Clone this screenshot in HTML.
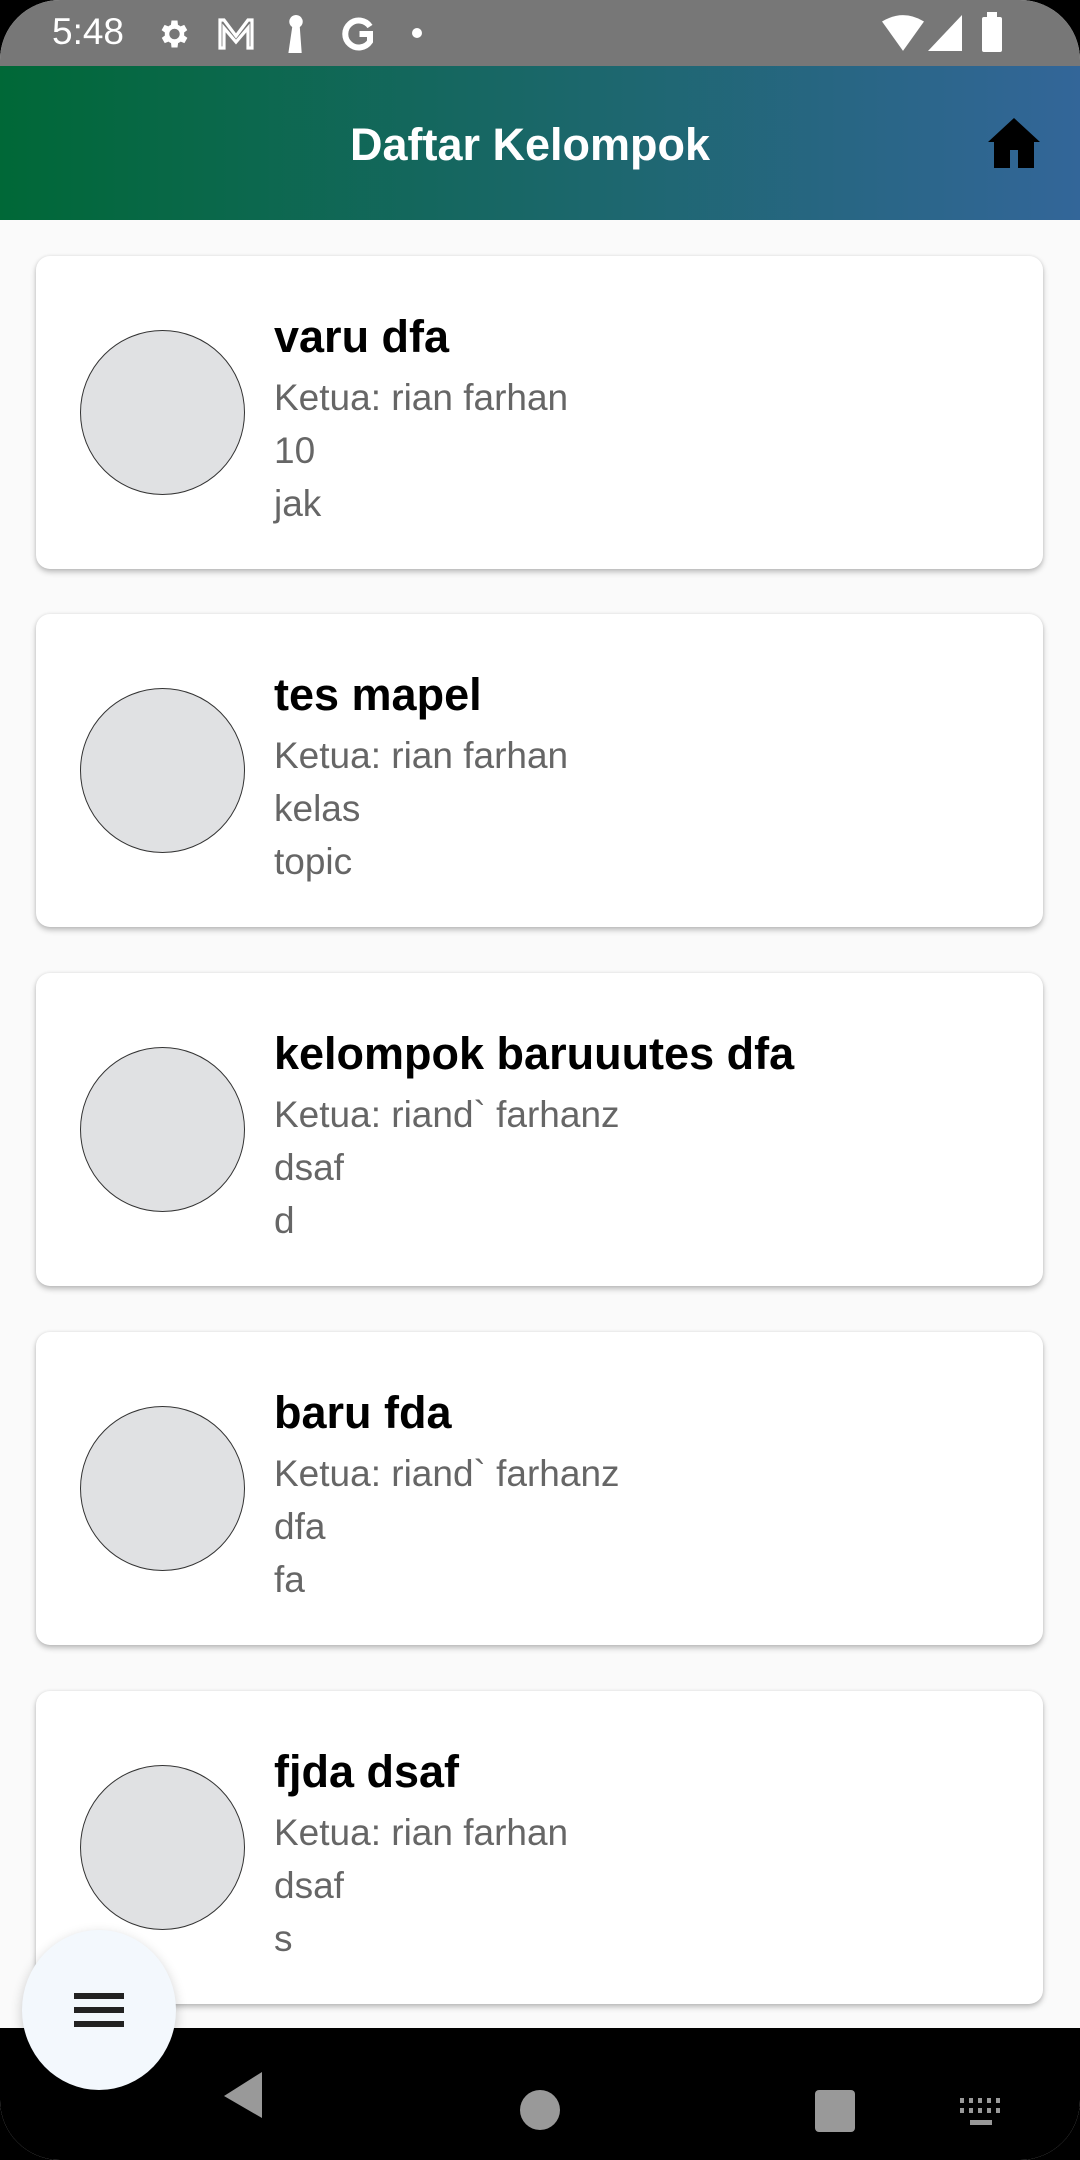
<!DOCTYPE html>
<html><head><meta charset="utf-8"><style>
*{margin:0;padding:0;box-sizing:border-box}
body{width:1080px;height:2160px;background:#000;font-family:"Liberation Sans",Roboto,sans-serif;overflow:hidden;position:relative}
.screen{position:absolute;left:0;top:0;width:1080px;height:2160px;background:#fafafa;border-radius:60px 60px 60px 60px;overflow:hidden}
.status{position:absolute;top:0;left:0;width:1080px;height:66px;background:#777;color:#fff}
.time{position:absolute;left:52px;top:11px;font-size:37px}
.appbar{position:absolute;top:66px;left:0;width:1080px;height:154px;background:linear-gradient(90deg,#006837,#336699)}
.appbar h1{position:absolute;left:0;right:0;top:53px;text-align:center;font-size:45px;font-weight:bold;color:#fff;padding-right:20px}
.card{position:absolute;left:36px;width:1007px;height:313px;background:#fff;border-radius:14px;box-shadow:0 3px 6px rgba(0,0,0,.25),0 0 3px rgba(0,0,0,.08)}
.circ{position:absolute;left:44px;top:74px;width:165px;height:165px;border-radius:50%;background:#e0e1e3;border:1.5px solid #333}
.t{position:absolute;left:238px;top:55px;font-size:45px;font-weight:bold;color:#000}
.s{position:absolute;left:238px;font-size:37px;color:#666}
.nav{position:absolute;left:0;top:2028px;width:1080px;height:132px;background:#000}
.fab{position:absolute;left:22px;top:1930px;width:154px;height:160px;border-radius:50%;background:#f3f8fd;box-shadow:0 4px 12px rgba(0,0,0,.2)}
.fab i{position:absolute;left:52px;width:50px;height:6px;background:#222}
</style></head><body><div class="screen">
<div class="status"><span class="time">5:48</span>
<svg style="position:absolute;left:155px;top:16px" width="36" height="36" viewBox="0 0 24 24"><path fill="#fff" d="M19.4 13a7.5 7.5 0 000-2l2.1-1.6-2-3.5-2.5 1a7 7 0 00-1.7-1L15 3h-4l-.4 2.9a7 7 0 00-1.7 1l-2.5-1-2 3.5L6.6 11a7.5 7.5 0 000 2l-2.1 1.6 2 3.5 2.5-1a7 7 0 001.7 1L11 21h4l.4-2.9a7 7 0 001.7-1l2.5 1 2-3.5zM13 15.5a3.5 3.5 0 110-7 3.5 3.5 0 010 7z"/></svg>
<svg style="position:absolute;left:216px;top:18px" width="40" height="32" viewBox="0 0 20 16"><path fill="none" stroke="#fff" stroke-width="1.6" d="M2 15V1h2l6 8 6-8h2v14h-2V5l-6 7-6-7v10z"/></svg>
<svg style="position:absolute;left:284px;top:15px" width="24" height="38" viewBox="0 0 12 20"><path fill="#fff" d="M6 0a3.5 3.5 0 012 6.4L9 20H2L4 6.4A3.5 3.5 0 016 0z"/></svg>
<svg style="position:absolute;left:340px;top:16px" width="36" height="36" viewBox="0 0 24 24"><path fill="none" stroke="#fff" stroke-width="4" d="M20 7a9 9 0 100 10V12h-7"/></svg>
<div style="position:absolute;left:412px;top:28px;width:10px;height:10px;border-radius:50%;background:#fff"></div>
<svg style="position:absolute;left:882px;top:15px" width="42" height="36" viewBox="0 0 20 17"><path fill="#fff" d="M0 3Q10-3 20 3L10 17z"/></svg>
<svg style="position:absolute;left:928px;top:15px" width="34" height="36" viewBox="0 0 17 18"><path fill="#fff" d="M17 0v18H0z"/></svg>
<div style="position:absolute;left:982px;top:17px;width:20px;height:35px;background:#fff;border-radius:2px"></div>
<div style="position:absolute;left:987px;top:12px;width:10px;height:6px;background:#fff"></div>
</div>
<div class="appbar"><h1>Daftar Kelompok</h1>
<svg style="position:absolute;left:986px;top:52px" width="56" height="50" viewBox="0 0 28 25"><path fill="#000" d="M14 0L27 12h-3v13h-8v-9h-4v9H4V12H1z"/></svg></div>

<div class="card" style="top:256px"><div class="circ"></div><div class="t">varu dfa</div><div class="s" style="top:121px">Ketua: rian farhan</div><div class="s" style="top:174px">10</div><div class="s" style="top:227px">jak</div></div>
<div class="card" style="top:614px"><div class="circ"></div><div class="t">tes mapel</div><div class="s" style="top:121px">Ketua: rian farhan</div><div class="s" style="top:174px">kelas</div><div class="s" style="top:227px">topic</div></div>
<div class="card" style="top:973px"><div class="circ"></div><div class="t">kelompok baruuutes dfa</div><div class="s" style="top:121px">Ketua: riand` farhanz</div><div class="s" style="top:174px">dsaf</div><div class="s" style="top:227px">d</div></div>
<div class="card" style="top:1332px"><div class="circ"></div><div class="t">baru fda</div><div class="s" style="top:121px">Ketua: riand` farhanz</div><div class="s" style="top:174px">dfa</div><div class="s" style="top:227px">fa</div></div>
<div class="card" style="top:1691px"><div class="circ"></div><div class="t">fjda dsaf</div><div class="s" style="top:121px">Ketua: rian farhan</div><div class="s" style="top:174px">dsaf</div><div class="s" style="top:227px">s</div></div>

<div class="nav">
<svg style="position:absolute;left:222px;top:44px" width="42" height="46" viewBox="0 0 21 23"><path fill="#999" d="M20 0v23L1 12z"/></svg>
<div style="position:absolute;left:520px;top:62px;width:40px;height:40px;border-radius:50%;background:#999"></div>
<div style="position:absolute;left:815px;top:62px;width:40px;height:42px;border-radius:4px;background:#999"></div>
<svg style="position:absolute;left:960px;top:70px" width="42" height="30" viewBox="0 0 42 30"><g fill="#999"><rect x="0" y="0" width="4" height="5"/><rect x="9" y="0" width="4" height="5"/><rect x="18" y="0" width="4" height="5"/><rect x="27" y="0" width="4" height="5"/><rect x="36" y="0" width="4" height="5"/><rect x="0" y="10" width="4" height="5"/><rect x="9" y="10" width="4" height="5"/><rect x="18" y="10" width="4" height="5"/><rect x="27" y="10" width="4" height="5"/><rect x="36" y="10" width="4" height="5"/><rect x="10" y="22" width="22" height="5"/></g></svg>
</div>
<div class="fab"><i style="top:63px"></i><i style="top:77px"></i><i style="top:91px"></i></div>
</div></body></html>
